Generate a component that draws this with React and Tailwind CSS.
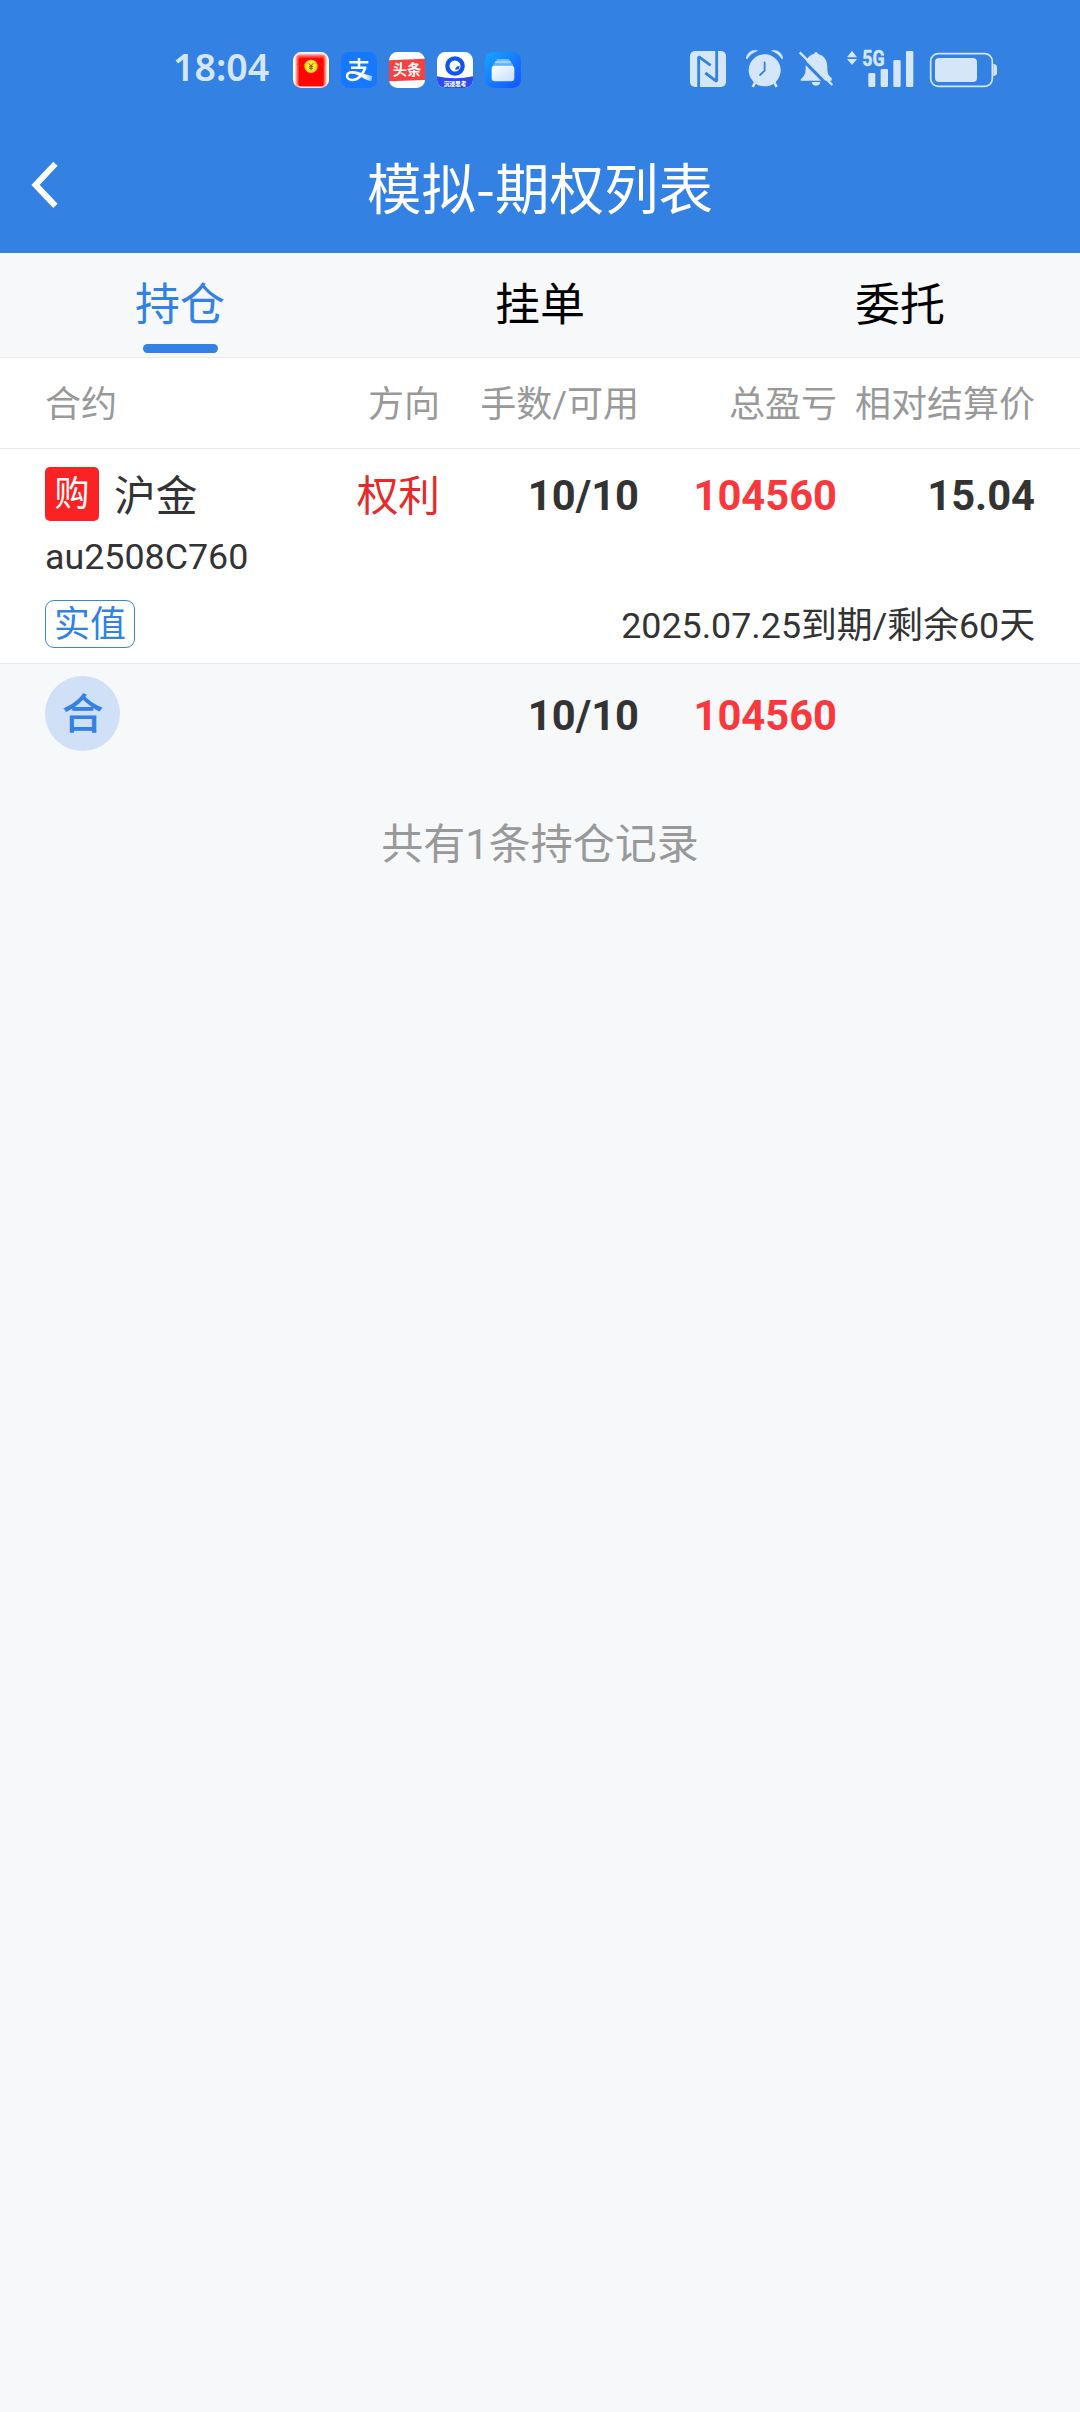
import { useState } from 'react'

const TABS = ['持仓', '挂单', '委托']

const POSITIONS = [
  {
    id: 'au2508C760',
    name: '沪金',
    type: '购',
    side: '权利',
    qty: '10/10',
    pnl: '104560',
    diff: '15.04',
    value: '实值',
    expiry: '2025.07.25到期/剩余60天',
  },
]

const COLS = 'grid grid-cols-[201px_194px_199px_198px_198px] px-[45px] text-right whitespace-nowrap'

function AppIcons() {
  return (
    <div className="flex gap-3">
      <svg className="w-9 h-9" viewBox="0 0 108 108">
        <defs>
          <filter id="soft" x="-20%" y="-20%" width="140%" height="140%">
            <feGaussianBlur stdDeviation="3" />
          </filter>
        </defs>
        <rect width="108" height="108" rx="25" fill="#fff" />
        <rect x="10" y="8" width="88" height="95" rx="8" fill="#ff4a3a" filter="url(#soft)" />
        <rect x="17" y="17" width="75" height="86" rx="6" fill="#fd0500" />
        <path d="M12 36q42 14 84 0" stroke="#e02a10" strokeWidth="2" fill="none" />
        <circle cx="54" cy="43" r="20" fill="#fdd90c" />
        <circle cx="54" cy="43" r="15" fill="#ffe93a" />
        <path d="M48 34l6 9 6-9M54 43v12M48 44h12M48 49h12" stroke="#8a5a00" strokeWidth="3" fill="none" />
      </svg>
      <svg className="w-9 h-9" viewBox="0 0 108 108">
        <defs>
          <linearGradient id="tail" x1="0" x2="1">
            <stop offset="0.6" stopColor="#fff" />
            <stop offset="1" stopColor="#8cbcff" />
          </linearGradient>
        </defs>
        <rect width="108" height="108" rx="25" fill="#1677ff" />
        <g fill="none" stroke="#fff" strokeWidth="7.5">
          <path d="M25 31h57M54 18v28M30 47h46" />
          <path d="M73 46C68 63 54 85 32 84C13 82 13 60 36 61" />
        </g>
        <path d="M34 57c18 0 32 10 60 15l-3 15C68 84 52 65 34 65z" fill="url(#tail)" />
      </svg>
      <svg className="w-9 h-9" viewBox="0 0 108 108">
        <rect width="108" height="108" rx="25" fill="#fff" />
        <path d="M0 25l108-5v64L0 88z" fill="#f8403f" />
        <text x="54" y="70" textAnchor="middle" fontSize="43" fontWeight="700" fill="#fff" className="font-['Noto_Sans_CJK_SC',sans-serif]">头条</text>
      </svg>
      <svg className="w-9 h-9" viewBox="0 0 108 108">
        <defs>
          <clipPath id="round">
            <rect width="108" height="108" rx="25" />
          </clipPath>
        </defs>
        <g clipPath="url(#round)">
          <rect width="108" height="108" fill="#fff" />
          <path d="M0 73q54 12 108 0v35H0z" fill="#2b4cf0" />
          <circle cx="54" cy="42" r="23" fill="none" stroke="#1256e8" strokeWidth="13" />
          <path d="M54 53q2-10 14-11l-3 10z" fill="#1256e8" />
          <text x="54" y="101" textAnchor="middle" fontSize="17" fontWeight="900" fill="#fff" className="font-['Noto_Sans_CJK_SC',sans-serif]">沉浸思考</text>
        </g>
      </svg>
      <svg className="w-9 h-9" viewBox="0 0 108 108">
        <defs>
          <linearGradient id="wallet" x1="0" y1="0" x2="1" y2="1">
            <stop offset="0" stopColor="#16a6fd" />
            <stop offset="1" stopColor="#1552ff" />
          </linearGradient>
          <linearGradient id="card" x1="0" y1="0" x2="1" y2="1">
            <stop offset="0" stopColor="#fff" />
            <stop offset="1" stopColor="#c3deff" />
          </linearGradient>
        </defs>
        <rect width="108" height="108" rx="25" fill="url(#wallet)" />
        <rect x="34" y="21" width="40" height="20" rx="5" fill="#6fbcff" />
        <rect x="29" y="27" width="50" height="20" rx="5" fill="#9ed2ff" />
        <rect x="24" y="34" width="60" height="20" rx="6" fill="#5fb0ff" />
        <rect x="20" y="41" width="68" height="47" rx="9" fill="url(#card)" />
      </svg>
    </div>
  )
}

function SystemIcons() {
  return (
    <svg className="w-[350px] h-[60px]" viewBox="0 0 1050 180" fill="#d6e6f9">
      {/* NFC */}
      <rect x="60" y="33" width="108" height="108" rx="15" />
      <path d="M86 141V50l36 26M140 33v91l-34-25" fill="none" stroke="#3281e3" strokeWidth="8.5" strokeLinejoin="bevel" />

      {/* Alarm */}
      <circle cx="284" cy="91" r="48" />
      <path d="M229 55C230 39 246 28 262 32C249 37 238 45 231 57zM338 55C337 39 321 28 305 32C318 37 329 45 336 57z" stroke="#d6e6f9" strokeWidth="2" />
      <path d="M257 124l-9 17M311 124l9 17" stroke="#d6e6f9" strokeWidth="8" />
      <path d="M284 67v25l-14 13" fill="none" stroke="#3281e3" strokeWidth="5.5" strokeLinecap="round" />

      {/* Muted bell */}
      <path d="M392 122v-4c13-11 15-18 15-36c0-24 9-37 25-40c0-7 12-7 12 0c18 4 28 18 28 41c0 20 4 23 13 31v8z" />
      <path d="M425 126h26c-2 15-24 15-26 0z" />
      <path d="M382 43l100 102" stroke="#3281e3" strokeWidth="9" />
      <path d="M389 37l98 98" stroke="#d6e6f9" strokeWidth="7" />

      {/* 5G signal */}
      <path d="M531 52l15-20 15 20zM531 57h30l-15 18z" />
      <text x="577" y="77" fontSize="65" fontWeight="700" stroke="#d6e6f9" strokeWidth="1.5" textLength="67" lengthAdjust="spacingAndGlyphs" className="font-['Roboto',sans-serif]">5G</text>
      <rect x="595" y="99" width="21" height="42" rx="4" />
      <rect x="632" y="87" width="22" height="54" rx="4" />
      <rect x="670" y="60" width="22" height="81" rx="4" />
      <rect x="708" y="33" width="22" height="108" rx="4" />

      {/* Battery */}
      <rect x="782" y="41" width="185" height="98" rx="23" fill="none" stroke="#d6e6f9" strokeWidth="5" />
      <rect x="795" y="54" width="126" height="72" rx="12" />
      <path d="M970 72q11 1 11 9v18q0 8-11 9z" />
    </svg>
  )
}

function PositionRow({ p }) {
  return (
    <div className="h-[215px] bg-white border-b border-[#e9eaeb]">
      <div className={`${COLS} h-[94px] items-center text-[41.7px] text-[#333]`}>
        <div className="flex items-center">
          <span className="w-[54px] h-[54px] mb-1 rounded-[5px] bg-[#fa2223] text-white text-[35px] leading-[56px] text-center">{p.type}</span>
          <span className="ml-[15px] pt-[2px]">{p.name}</span>
        </div>
        <span className="pt-[2px] text-[#e62a2a]">{p.side}</span>
        <span className="font-bold">{p.qty}</span>
        <span className="font-bold text-[#f9383d]">{p.pnl}</span>
        <span className="font-bold">{p.diff}</span>
      </div>
      <p className="px-[45px] text-[35.8px] leading-[28px] text-[#333]">{p.id}</p>
      <div className="flex items-start justify-between px-[45px] pt-[29px]">
        <span className="h-12 px-2 rounded-[9px] border border-[#3f84cc] text-[36px] leading-[48px] text-[#3281e3]">{p.value}</span>
        <span className="text-[35.8px] leading-[53px] text-[#333]">{p.expiry}</span>
      </div>
    </div>
  )
}

export default function App() {
  const [tab, setTab] = useState(TABS[0])

  return (
    <div className="w-[1080px] h-[2412px] bg-[#f6f8fa] font-['Roboto','Noto_Sans_CJK_SC',sans-serif]">
      <header className="h-[253px] bg-[#3281e3]">
        <div className="flex items-start pt-10 pl-[173px]">
          <span className="w-[120px] pt-px font-['Noto_Sans',sans-serif] text-[37.5px] leading-[52px] font-semibold text-[#d6e6f9]">18:04</span>
          <div className="w-[377px] pt-3">
            <AppIcons />
          </div>
          <SystemIcons />
        </div>
        <div className="grid grid-cols-[120px_1fr_120px] items-center pt-[46px]">
          <svg className="w-[60px] h-[60px] ml-[15px]" viewBox="0 0 60 60" fill="none" stroke="#fff" strokeWidth="6">
            <path d="M40.4 7.8L20.5 28.9l19.9 21" />
          </svg>
          <h1 className="text-center text-[54.5px] leading-[80px] text-white font-['Noto_Sans_CJK_SC',sans-serif]">模拟-期权列表</h1>
        </div>
      </header>

      <nav className="grid grid-cols-3 h-[105px] border-b border-[#e9eaeb]">
        {TABS.map(t => (
          <button
            key={t}
            onClick={() => setTab(t)}
            className={`flex flex-col items-center pt-5 text-[45px] leading-[66px] ${t === tab ? 'text-[#3281e3]' : 'text-black'}`}
          >
            {t}
            {t === tab && <span className="w-[75px] h-[9px] mt-[5px] rounded-full bg-[#3281e3]" />}
          </button>
        ))}
      </nav>

      <div className={`${COLS} h-[91px] pt-1 items-center bg-white border-b border-[#e9eaeb] text-[36px] text-[#999]`}>
        <span className="text-left">合约</span>
        <span>方向</span>
        <span>手数/可用</span>
        <span>总盈亏</span>
        <span>相对结算价</span>
      </div>

      {POSITIONS.map(p => <PositionRow key={p.id} p={p} />)}

      {/* Totals */}
      <div className={`${COLS} h-[104px] items-center text-[41.7px] font-bold text-[#333]`}>
        <span className="w-[75px] h-[75px] mb-[5px] rounded-full bg-[#d0e0f7] text-center leading-[78px] font-medium text-[#3281e3]">合</span>
        <span />
        <span>10/10</span>
        <span className="text-[#f9383d]">104560</span>
      </div>

      <p className="pt-[46px] text-center text-[42px] leading-[62px] text-[#999]">共有1条持仓记录</p>
    </div>
  )
}
